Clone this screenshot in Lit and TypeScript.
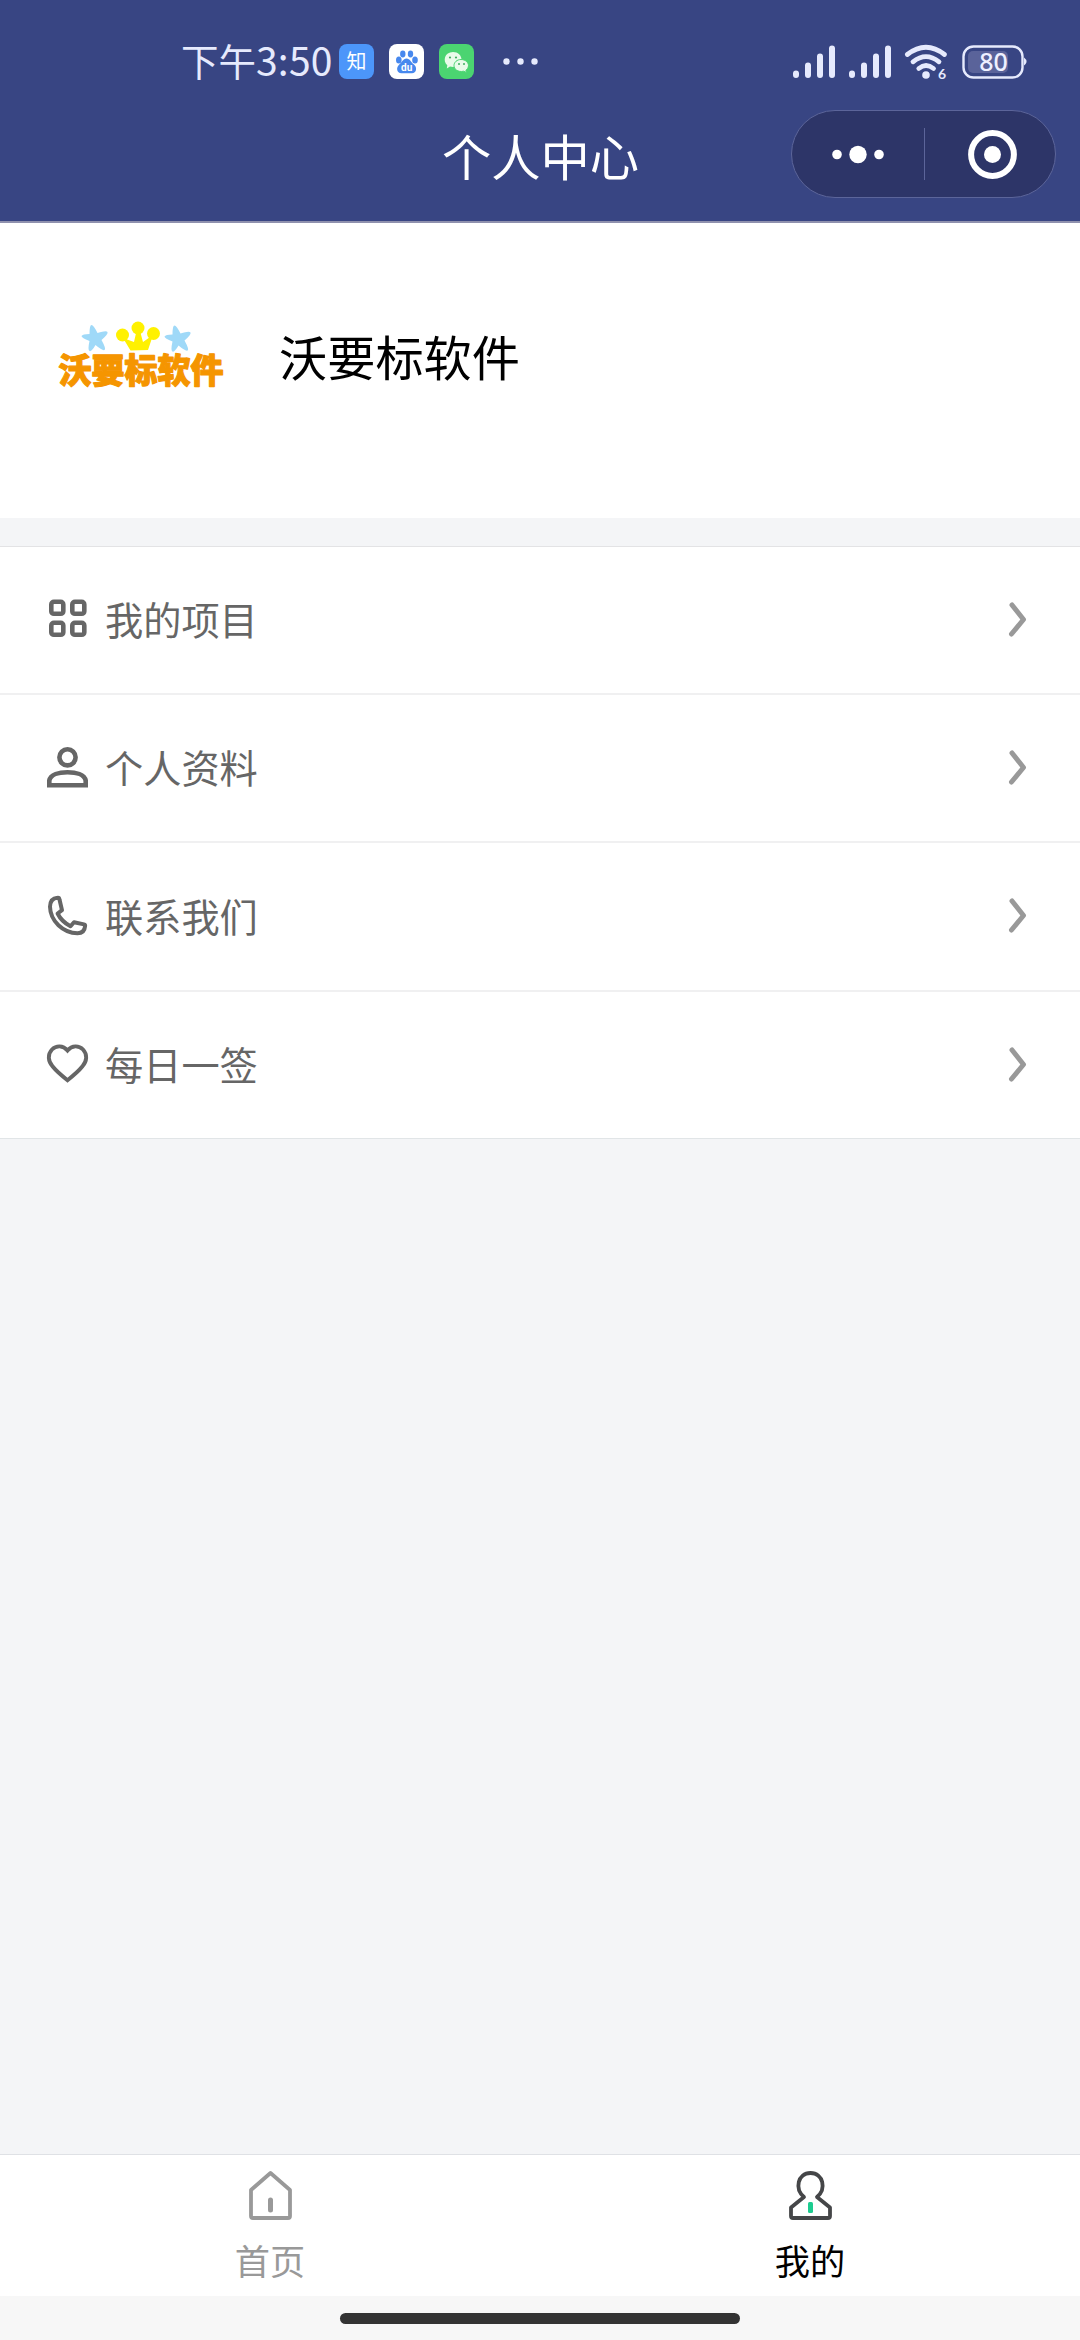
import { LitElement, html, css, svg } from "lit";
import { customElement } from "lit/decorators.js";

const grid = svg`<g fill="none" stroke="#666" stroke-width="4.6">
  <rect x="5.3" y="4.8" width="12" height="12" rx="2.6"/><rect x="26.3" y="4.8" width="12" height="12" rx="2.6"/>
  <rect x="5.3" y="25.8" width="12" height="12" rx="2.6"/><rect x="26.3" y="25.8" width="12" height="12" rx="2.6"/></g>`;
const person = svg`<g fill="none" stroke="#666" stroke-width="4.6">
  <circle cx="21.5" cy="12.3" r="8.1"/><path d="M3.3 40.2V35.5C4.5 29.5 13 27.2 21.5 27.2S38.500 29.500 39.700 35.500V40.200Z"/></g>`;
const phone = svg`<path fill="none" stroke="#666" stroke-width="4" stroke-linejoin="round" d="M11.500 3.800Q13.200 3.600 13.500 5.500L16 16.200L11.600 19.500Q15.500 27.500 24.500 32.300L28 28.200L38 30.400Q39.300 30.700 39.100 32Q38.500 39.300 31.500 39.300C17 38.800 4.300 27 4 12.800Q4.200 4.300 11.500 3.800Z"/>`;
const heart = svg`<path fill="none" stroke="#666" stroke-width="3.900" d="M21.500 8.400C17 3 10 3.300 6 7.500C1.300 12.500 2.100 19.200 6.500 24.300Q11 30 21.500 38.200Q32 30 36.500 24.300C40.900 19.200 41.700 12.500 37 7.500C33 3.300 26 3 21.500 8.400Z"/>`;

const rows = [
  { label: "我的项目", icon: grid },
  { label: "个人资料", icon: person },
  { label: "联系我们", icon: phone },
  { label: "每日一签", icon: heart },
];

const bars = svg`<path d="M4 30.500v1.600M16 22.500v9.600M28 13.500v18.600M40 5.500v26.600" stroke="#e6eafd" stroke-width="6" stroke-linecap="round"/>`;
const star = svg`<path d="M-3-13Q-1-13 3-5Q12-8 13-6Q14-4 7 2Q12 11 10 12Q8 13 1 7Q-3 14-5 13Q-7 12-5 3Q-13 0-13-2Q-12-4-5-4Q-5-13-3-13Z" fill="#9fd9f8"/>`;

@customElement("app-root")
export class AppRoot extends LitElement {
  static styles = css`
    :host { display: flex; flex-direction: column; width: 1080px; height: 2340px; background: #f4f5f7;
      font-family: "Noto Sans CJK SC", sans-serif; font-weight: 400; overflow: hidden; }
    * { box-sizing: border-box; }
    svg { display: block; flex: none; overflow: visible; }
    .head { height: 223px; background: #384583; border-bottom: 2px solid #8f91ae; flex: none; }
    .status { height: 109px; padding: 14px 52px 0 181px; display: flex; align-items: center; color: #e6eafd; }
    .time { width: 158px; font-size: 37.500px; line-height: 50px; white-space: nowrap; padding-bottom: 4px; }
    .clock { font-size: 39px; letter-spacing: 0.2px; }
    .apps { display: flex; gap: 15px; align-items: center; }
    .zhi { width: 35px; height: 35px; border-radius: 8px; background: #4c96fa; color: #fff; font-size: 20px; line-height: 34px; text-align: center; }
    .right { margin-left: auto; display: flex; align-items: center; }
    .nav { height: 112px; display: grid; grid-template-columns: 1fr auto 1fr; align-items: start; }
    .title { grid-column: 2; color: #fff; font-size: 49.300px; line-height: 70px; padding: 11px 0 0 1px; }
    .capsule { justify-self: end; margin: 1px 24px 0 0; width: 265px; height: 88px; border-radius: 44px; background: #2d3568;
      border: 1px solid #5c659a; display: flex; align-items: center; }
    .profile { height: 295px; background: #fff; flex: none; padding: 17px 0 0 55px; display: flex; align-items: flex-start; }
    .logo { margin-top: 78px; }
    .name { margin: 80px 0 0 53px; color: #000; font-size: 48.200px; line-height: 70px; }
    .list { margin-top: 28px; flex: none; border-top: 1px solid #e3e3e5; border-bottom: 1px solid #e1e5e7; background: #fff; }
    .row { height: 148px; border-bottom: 2px solid #f0f0f1; display: flex; align-items: center; padding: 0 51px 3px 46px; }
    .row:nth-child(3) { height: 149px; }
    .row:last-child { border: 0; height: 146px; }
    .label { margin-left: 16px; font-size: 38.200px; line-height: 56px; color: #666; flex: 1; padding-top: 1px; }
    .tabs { margin-top: auto; height: 142px; border-top: 1px solid #dfe1e5; background: #fff; display: flex; flex: none; }
    .tab { flex: 1; display: flex; flex-direction: column; align-items: center; padding-top: 14px; color: #999; font-size: 35.200px; line-height: 52px; }
    .tab.on { color: #000; }
    .tab span { margin-top: 13px; }
    .home { height: 44px; background: #f7f7f7; flex: none; display: flex; justify-content: center; padding-top: 17px; }
    .pill { width: 400px; height: 11px; border-radius: 6px; background: #333; }
    .mark { font: 900 34px "Noto Sans CJK SC", sans-serif; }
  `;

  render() {
    return html`
      <header class="head">
        <div class="status">
          <div class="time">下午<span class="clock">3:50</span></div>
          <div class="apps">
            <div class="zhi">知</div>
            <svg width="35" height="35"><rect width="35" height="35" rx="8" fill="#fff"/><g fill="#4788ee"><ellipse cx="9.800" cy="16" rx="2.800" ry="3.600"/><ellipse cx="13.800" cy="10" rx="2.700" ry="3.400"/><ellipse cx="21.500" cy="10" rx="2.700" ry="3.400"/><ellipse cx="26" cy="16" rx="2.800" ry="3.600"/><path d="M17.500 14.500C21 14.500 22 18.500 25 20.500C28.500 23.500 27.500 29 23 29.300H12.500C7.500 29 7 23.500 10 20.800C13 18.500 14 14.500 17.500 14.500Z"/></g><text x="17.700" y="27" font-size="10" font-weight="700" fill="#fff" text-anchor="middle" font-family="Roboto, sans-serif">du</text></svg>
            <svg width="35" height="35"><rect width="35" height="35" rx="8" fill="#4bd471"/><g fill="#e9fbe9"><path d="M14 8C19 8 22.500 11.500 22.500 15.500S19 23 14 23L11 22.500L7.800 24.500L8.300 21.300C3.500 17 5.500 8 14 8Z"/><path d="M22 15.500C26.500 15.500 29.500 18.500 29.500 21.800Q29.500 24.500 27 26.300L27.300 28.500L24.700 27.200C18.500 28.500 15 25 15 21.600S18 15.500 22 15.500Z" stroke="#4bd471"/></g><g fill="#3fae5f"><circle cx="11" cy="13.500" r="1.100"/><circle cx="17" cy="13.500" r="1.100"/><circle cx="20" cy="20" r="1"/><circle cx="25" cy="20" r="1"/></g></svg>
            <svg width="70" height="35" fill="#e6eafd"><circle cx="17.500" cy="17.500" r="3.200"/><circle cx="31.500" cy="17.500" r="3.200"/><circle cx="45.500" cy="17.500" r="3.200"/></svg>
          </div>
          <div class="right">
            <svg width="56" height="37">${bars}</svg><svg width="56" height="37">${bars}</svg>
            <svg width="58" height="37" fill="none" stroke="#e6eafd" stroke-width="4.800" stroke-linecap="round"><path d="M3.300 11.500Q22 -3 40.500 11.500M9 18.800Q22 8.500 35 18.800M14.800 25.500Q22 19.500 29.500 25.500"/><circle cx="22" cy="32" r="3.800" fill="#e6eafd" stroke="none"/><text x="34" y="36" font-size="14" font-weight="700" fill="#e6eafd" stroke="none" font-family="Lato, sans-serif">6</text></svg>
            <svg width="66" height="37"><rect x="1.500" y="3.500" width="59" height="31" rx="10" fill="none" stroke="#e6eafd" stroke-width="2.400"/><rect x="6" y="8" width="40" height="22" rx="5" fill="#5a639a"/><path d="M62 14.500Q67 18.500 62 22.500Z" fill="#e6eafd"/><text x="31.500" y="27.700" font-size="25" font-weight="500" fill="#eef0ff" text-anchor="middle" font-family="Noto Sans, sans-serif">80</text></svg>
          </div>
        </div>
        <div class="nav">
          <div class="title">个人中心</div>
          <div class="capsule"><svg width="263" height="86"><g fill="#fff"><circle cx="45" cy="43.500" r="4.800"/><circle cx="66" cy="43.500" r="8.700"/><circle cx="87" cy="43.500" r="4.800"/><circle cx="200.500" cy="43.500" r="8.500"/></g><path d="M132.500 17v52" stroke="#5c659a"/><circle cx="200.500" cy="43.500" r="21.400" fill="none" stroke="#fff" stroke-width="6"/></svg></div>
        </div>
      </header>
      <section class="profile">
        <svg class="logo" width="171" height="72"><g transform="translate(39.500 20)">${star}</g><g transform="translate(122.500 20.500)">${star}</g>
          <g fill="#fff100"><circle cx="67.500" cy="17" r="6.500"/><circle cx="83" cy="10" r="6.500"/><circle cx="98.500" cy="15.500" r="6.500"/><path d="M68 20L79 24L81.500 13H85L88 24L98 17L93 32L75.500 32.500Z"/></g>
          <text class="mark" x="3.500" y="64.500" textLength="165" lengthAdjust="spacingAndGlyphs" fill="#f59500" stroke="#f59500" stroke-width="1.200" stroke-linejoin="round">沃要标软件</text></svg>
        <div class="name">沃要标软件</div>
      </section>
      <section class="list">
        ${rows.map((r) => html`<div class="row"><svg width="43" height="43">${r.icon}</svg><span class="label">${r.label}</span>
          <svg width="22" height="36"><path d="M5 4L16.500 18.500L4.500 33" fill="none" stroke="#999" stroke-width="5" stroke-linecap="round" stroke-linejoin="round"/></svg></div>`)}
      </section>
      <nav class="tabs">
        <div class="tab"><svg width="46" height="52" fill="none" stroke="#999" stroke-width="3.800" stroke-linejoin="round" stroke-linecap="round"><path d="M23.500 4L43 21V47Q43 49 41 49H6Q4 49 4 47V21Z"/><path d="M23.500 31V41" stroke-width="5"/></svg><span>首页</span></div>
        <div class="tab on"><svg width="46" height="52" fill="none" stroke="#454648" stroke-width="3.800" stroke-linejoin="round"><path d="M17 28C7.500 20 10.500 4 23.500 4S39.500 20 30 28L43 38.500V47Q43 49 41 49H6Q4 49 4 47V38.500Z"/><rect x="21" y="33" width="5" height="11" rx="1.500" fill="#1dcc90" stroke="none"/></svg><span>我的</span></div>
      </nav>
      <div class="home"><div class="pill"></div></div>`;
  }
}
